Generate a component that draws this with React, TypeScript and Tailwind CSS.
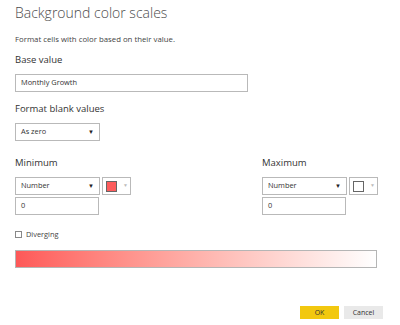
// Background color scales dialog

function Select({ value, width }: { value: string; width: string }) {
  return (
    <div
      className={`flex h-[18px] ${width} items-center justify-between border border-[#b9b9b9] bg-white pl-[5px] pr-[5px] text-[7.4px] text-[#333]`}
    >
      <span>{value}</span>
      <span className="text-[6px] text-[#222]">▼</span>
    </div>
  );
}

function Swatch({ color }: { color: string }) {
  return (
    <div className="flex h-[18px] w-[29px] items-center gap-[6px] border border-[#b9b9b9] bg-white pl-[3px]">
      <div className={`h-[11px] w-[11px] border border-[#666] ${color}`} />
      <span className="text-[5px] text-[#bbb]">▼</span>
    </div>
  );
}

function TextBox({ value, width }: { value: string; width: string }) {
  return (
    <div
      className={`flex h-[18px] ${width} items-center border border-[#b9b9b9] bg-white pl-[5px] text-[7.4px] text-[#333]`}
    >
      {value}
    </div>
  );
}

function Bound({ label, color }: { label: string; color: string }) {
  return (
    <div>
      <p className="text-[9.5px] leading-[13px] text-[#333]">{label}</p>
      <div className="mt-[8px] flex gap-[2px]">
        <Select value="Number" width="w-[85px]" />
        <Swatch color={color} />
      </div>
      <div className="mt-[2px]">
        <TextBox value="0" width="w-[84px]" />
      </div>
    </div>
  );
}

export default function App() {
  return (
    <div
      className="h-[325px] w-[400px] overflow-hidden bg-white pl-[15px] pt-[5px]"
      style={{ fontFamily: '"Open Sans", "Noto Sans", sans-serif' }}
    >
      <h1 className="text-[14px] font-light leading-[16px] text-[#4b4b4b]">Background color scales</h1>
      <p className="mt-[13px] text-[7.8px] leading-[10px] text-[#444]">
        Format cells with color based on their value.
      </p>

      <p className="mt-[9px] text-[9.5px] leading-[13px] text-[#333]">Base value</p>
      <div className="mt-[8px]">
        <TextBox value="Monthly Growth" width="w-[233px]" />
      </div>

      <p className="mt-[10px] text-[9.5px] leading-[13px] text-[#333]">Format blank values</p>
      <div className="mt-[8px]">
        <Select value="As zero" width="w-[85px]" />
      </div>

      <div className="mt-[15px] flex gap-[131px]">
        <Bound label="Minimum" color="bg-[#fd5c5c]" />
        <Bound label="Maximum" color="bg-white" />
      </div>

      <label className="mt-[14px] flex items-center gap-[4px] text-[7.4px] leading-[10px] text-[#444]">
        <span className="h-[7px] w-[7px] border border-[#888] bg-white" />
        Diverging
      </label>

      <div className="mt-[11px] h-[18px] w-[362px] border border-[#b5b5b5] bg-gradient-to-r from-[#fd5858] to-white" />

      <div className="mt-[38px] flex gap-[5px] pl-[285px]">
        <button className="h-[13px] w-[39px] bg-[#f2c80f] text-[7px] leading-[13px] text-[#333]">OK</button>
        <button className="h-[13px] w-[39px] bg-[#e9e9e9] text-[7px] leading-[13px] text-[#333]">Cancel</button>
      </div>
    </div>
  );
}
